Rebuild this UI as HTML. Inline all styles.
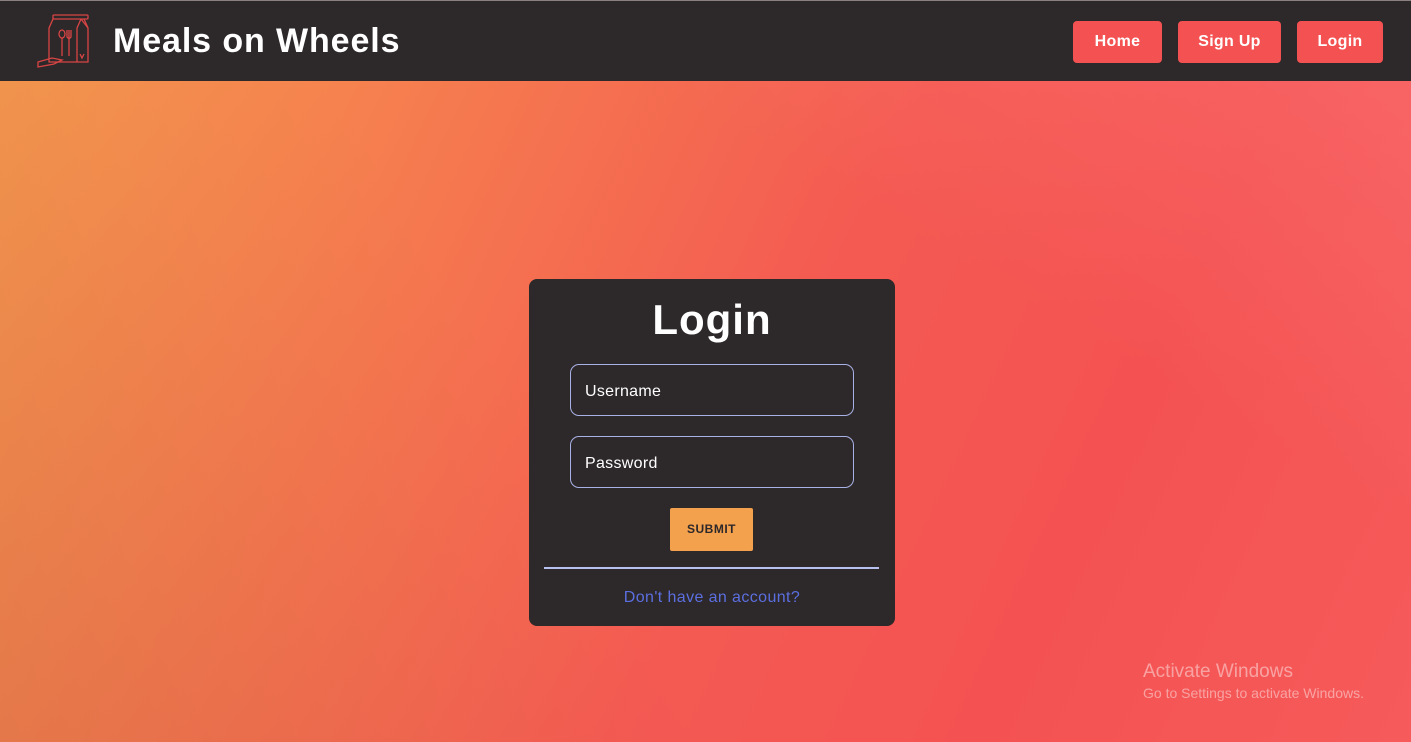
<!DOCTYPE html>
<html><head><meta charset="utf-8"><style>
*{margin:0;padding:0;box-sizing:border-box}
body{width:1411px;height:742px;overflow:hidden;font-family:"Liberation Sans",sans-serif;position:relative;
background:linear-gradient(115deg,#f89e4f 0%,#f5784f 30%,#f45a52 55%,#f45252 75%,#f65a5a 100%);}
.shade{position:absolute;left:0;top:80px;width:1411px;height:662px;
background:linear-gradient(60deg,rgba(150,60,50,0.18) 0%,rgba(150,60,50,0.06) 25%,rgba(0,0,0,0) 40%);}
.shade2{position:absolute;left:0;top:80px;width:1411px;height:662px;
background:linear-gradient(210deg,rgba(255,130,130,0.35) 0%,rgba(255,130,130,0) 30%);}
header{position:absolute;left:0;top:0;width:1411px;height:81px;background:#2d2829;border-top:1px solid #8a8080}
.title{position:absolute;left:113px;top:21px;color:#fff;font-size:34px;font-weight:bold;letter-spacing:0.9px}
.btn{position:absolute;top:20px;height:42px;background:#f45252;color:#fff;border-radius:4px;font-weight:bold;font-size:16px;text-align:center;line-height:42px;letter-spacing:0.3px}
.card{position:absolute;left:529px;top:279px;width:366px;height:347px;background:#2d2829;border-radius:8px}
.card h1{position:absolute;top:17px;width:100%;text-align:center;color:#fff;font-size:42px;font-weight:bold;letter-spacing:1px}
.inp{position:absolute;left:41px;width:284px;height:52px;border:1px solid #a9b2e6;border-radius:9px;color:#fff;font-size:16px;padding-left:14px;line-height:54px;letter-spacing:0.3px}
.sub{position:absolute;left:141px;top:229px;width:83px;height:43px;background:#f4a14e;border-radius:2px;color:#2d2829;font-weight:bold;font-size:12px;text-align:center;line-height:43px;letter-spacing:0.5px}
.hr{position:absolute;left:15px;top:288px;width:335px;height:2px;background:#b8c0f0}
.link{position:absolute;top:310px;width:100%;text-align:center;color:#5b6fe0;font-size:16px;letter-spacing:0.4px}
.wm{position:absolute;left:1143px;color:rgba(255,255,255,0.45)}
</style></head><body>
<div class="shade"></div><div class="shade2"></div>
<header>
<svg style="position:absolute;left:36px;top:13px" width="56" height="56" viewBox="0 0 56 56" fill="none" stroke="#d94545" stroke-width="1.3">
<rect x="17" y="1" width="35" height="4" rx="1"/>
<path d="M17 5 L13 14 L13 48 L52 48 L52 14 L48 5"/>
<path d="M45 5 L41 14 L41 48 M45 5 L52 14 M44 40 L46 44 L48 40"/>
<ellipse cx="26" cy="20" rx="3" ry="4"/><path d="M26 24 V42"/>
<path d="M31 16 V23 Q33 26 35 23 V16 M33 16 V42"/>
<path d="M2 48 L16 44 L26 46 L18 50 L2 53 Z"/>
</svg>
<div class="title">Meals on Wheels</div>
<div class="btn" style="left:1073px;width:89px">Home</div>
<div class="btn" style="left:1178px;width:103px">Sign Up</div>
<div class="btn" style="left:1297px;width:86px">Login</div>
</header>
<div class="card">
<h1>Login</h1>
<div class="inp" style="top:85px">Username</div>
<div class="inp" style="top:157px">Password</div>
<div class="sub">SUBMIT</div>
<div class="hr"></div>
<div class="link">Don't have an account?</div>
</div>
<div class="wm" style="top:661px;font-size:19px">Activate Windows</div>
<div class="wm" style="top:685px;font-size:14px">Go to Settings to activate Windows.</div>
</body></html>
